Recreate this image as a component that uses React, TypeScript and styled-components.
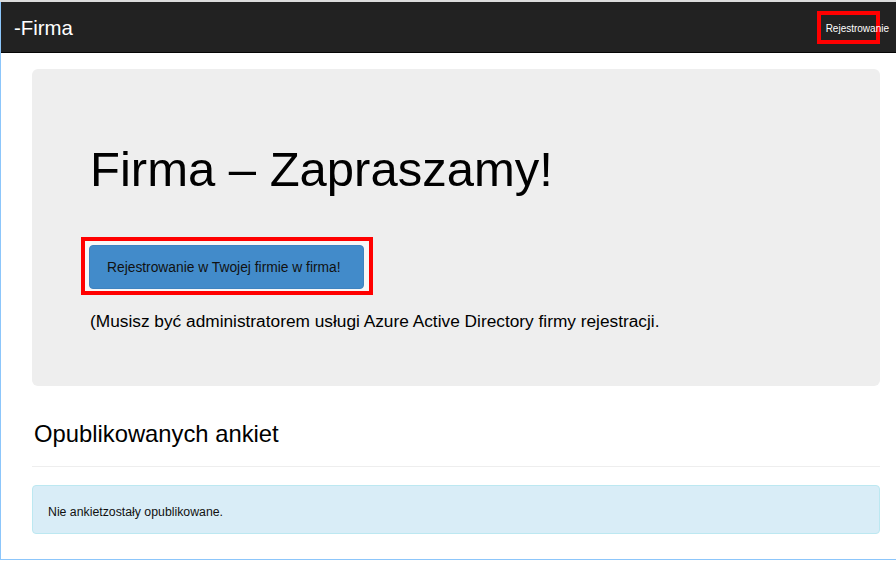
import React from "react";
import styled, { createGlobalStyle } from "styled-components";

const GlobalStyle = createGlobalStyle`
  html, body { margin: 0; padding: 0; background: #ffffff; }
  body { font-family: "Liberation Sans", Arial, sans-serif; color: #111; }
  * { box-sizing: border-box; }
`;

const TopStrip = styled.div`
  height: 2px;
  background: #dcdcdc;
`;

const Frame = styled.div`
  height: 558px;
  border-left: 1px solid #8cc6fb;
  border-bottom: 1px solid #8cc6fb;
  display: flex;
  flex-direction: column;
`;

const Navbar = styled.header`
  position: relative;
  height: 51px;
  background: #222222;
  border-bottom: 1px solid #050505;
  display: flex;
  align-items: center;
  justify-content: space-between;
  padding: 0 7px 0 13px;
`;

const Brand = styled.div`
  color: #ffffff;
  font-size: 20.4px;
  line-height: 24px;
  margin-top: 1px;
`;

const NavLink = styled.div`
  position: relative;
  z-index: 1;
  color: #ffffff;
  font-size: 10px;
  line-height: 14px;
  margin-top: 4px;
`;

const Annotation = styled.div`
  position: absolute;
  left: 816px;
  top: 9px;
  width: 63px;
  height: 33px;
  border: 4px solid #ff0000;
  pointer-events: none;
`;

const Main = styled.main`
  padding: 16px 16px 0 31px;
  display: flex;
  flex-direction: column;
`;

const Jumbotron = styled.section`
  background: #eeeeee;
  border-radius: 6px;
  padding: 73px 58px 53px;
  display: flex;
  flex-direction: column;
  align-items: flex-start;
`;

const Title = styled.h1`
  margin: 0;
  font-size: 49px;
  font-weight: 400;
  line-height: 54px;
  color: #000;
`;

const HighlightFrame = styled.div`
  margin: 41px 0 0 -9px;
  padding: 4px 5px 2px 4px;
  border: 4px solid #ff0000;
  background: #f7f7f7;
`;

const PrimaryButton = styled.button`
  display: block;
  height: 44px;
  width: 275px;
  padding: 0 0 0 17px;
  text-align: left;
  font-family: inherit;
  font-size: 13.8px;
  color: #111;
  background: #428bca;
  border: 1px solid #3f83c0;
  border-radius: 4px;
`;

const Note = styled.p`
  margin: 14px 0 0;
  font-size: 17.3px;
  line-height: 24px;
  color: #000;
`;

const SectionTitle = styled.h2`
  margin: 35px 0 0 2px;
  font-size: 23.8px;
  font-weight: 400;
  line-height: 26px;
  color: #000;
`;

const Divider = styled.hr`
  margin: 19px 0 0;
  border: 0;
  border-top: 1px solid #eeeeee;
`;

const InfoAlert = styled.div`
  margin-top: 18px;
  height: 49px;
  padding: 19px 15px 0;
  background: #d9edf7;
  border: 1px solid #bce8f1;
  border-radius: 4px;
  font-size: 12.3px;
  line-height: 14px;
  color: #111;
`;

export default function App() {
  return (
    <>
      <GlobalStyle />
      <TopStrip />
      <Frame>
        <Navbar>
          <Brand>-Firma</Brand>
          <NavLink>Rejestrowanie</NavLink>
          <Annotation />
        </Navbar>
        <Main>
          <Jumbotron>
            <Title>Firma – Zapraszamy!</Title>
            <HighlightFrame>
              <PrimaryButton>Rejestrowanie w Twojej firmie w firma!</PrimaryButton>
            </HighlightFrame>
            <Note>(Musisz być administratorem usługi Azure Active Directory firmy rejestracji.</Note>
          </Jumbotron>
          <SectionTitle>Opublikowanych ankiet</SectionTitle>
          <Divider />
          <InfoAlert>Nie ankietzostały opublikowane.</InfoAlert>
        </Main>
      </Frame>
    </>
  );
}
